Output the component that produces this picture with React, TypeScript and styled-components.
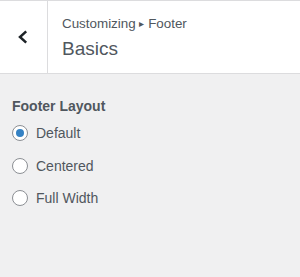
import { useState } from "react"
import styled, { createGlobalStyle } from "styled-components"

const GlobalStyle = createGlobalStyle`
  html, body {
    margin: 0;
    padding: 0;
    background: #f0f0f1;
  }
  body {
    font-family: "Liberation Sans", Arial, sans-serif;
    color: #50575e;
  }
`

const Panel = styled.div`
  width: 300px;
  height: 277px;
  background: #f0f0f1;
  display: flex;
  flex-direction: column;
`

const Header = styled.div`
  height: 72px;
  display: flex;
  background: #fff;
  border-top: 1px solid #dcdcde;
  border-bottom: 1px solid #dcdcde;
`

const BackButton = styled.button`
  width: 48px;
  flex: none;
  border: 0;
  border-right: 1px solid #dcdcde;
  background: #fff;
  display: flex;
  align-items: center;
  justify-content: center;
  padding: 0 1px 0 0;
  color: #1d2327;
`

const TitleBlock = styled.div`
  display: flex;
  flex-direction: column;
  padding: 13px 0 0 14px;
`

const Crumb = styled.span`
  font-size: 13.4px;
  line-height: 20px;
  color: #50575e;
`

const Arrow = styled.span`
  font-size: 10px;
  vertical-align: 1px;
`

const Title = styled.h3`
  margin: 2px 0 0;
  font-size: 19px;
  line-height: 26px;
  font-weight: 400;
  color: #50575e;
`

const Section = styled.div`
  padding: 23px 12px 0;
  display: flex;
  flex-direction: column;
`

const Legend = styled.span`
  font-size: 14px;
  font-weight: 700;
  line-height: 18px;
  color: #50575e;
  margin-bottom: 2px;
`

const Option = styled.label`
  display: flex;
  align-items: center;
  gap: 8px;
  height: 32.5px;
  font-size: 14px;
  color: #50575e;
`

const Radio = styled.span<{ $checked: boolean }>`
  width: 16px;
  height: 16px;
  box-sizing: border-box;
  border-radius: 50%;
  border: 1px solid #8c8f94;
  background: #fff;
  display: flex;
  align-items: center;
  justify-content: center;
  &::after {
    content: "";
    width: 8px;
    height: 8px;
    border-radius: 50%;
    background: #3582c4;
    display: ${(p) => (p.$checked ? "block" : "none")};
  }
`

const options = ["Default", "Centered", "Full Width"]

export default function App() {
  const [value, setValue] = useState("Default")
  return (
    <>
      <GlobalStyle />
      <Panel>
        <Header>
          <BackButton aria-label="Back">
            <svg width="12" height="14" viewBox="0 0 12 14">
              <path d="M9.2 1.4 3 7l6.2 5.6" fill="none" stroke="currentColor" strokeWidth="2.5" />
            </svg>
          </BackButton>
          <TitleBlock>
            <Crumb>
              Customizing <Arrow>▸</Arrow> Footer
            </Crumb>
            <Title>Basics</Title>
          </TitleBlock>
        </Header>
        <Section>
          <Legend>Footer Layout</Legend>
          {options.map((o) => (
            <Option key={o} onClick={() => setValue(o)}>
              <Radio $checked={value === o} />
              {o}
            </Option>
          ))}
        </Section>
      </Panel>
    </>
  )
}
